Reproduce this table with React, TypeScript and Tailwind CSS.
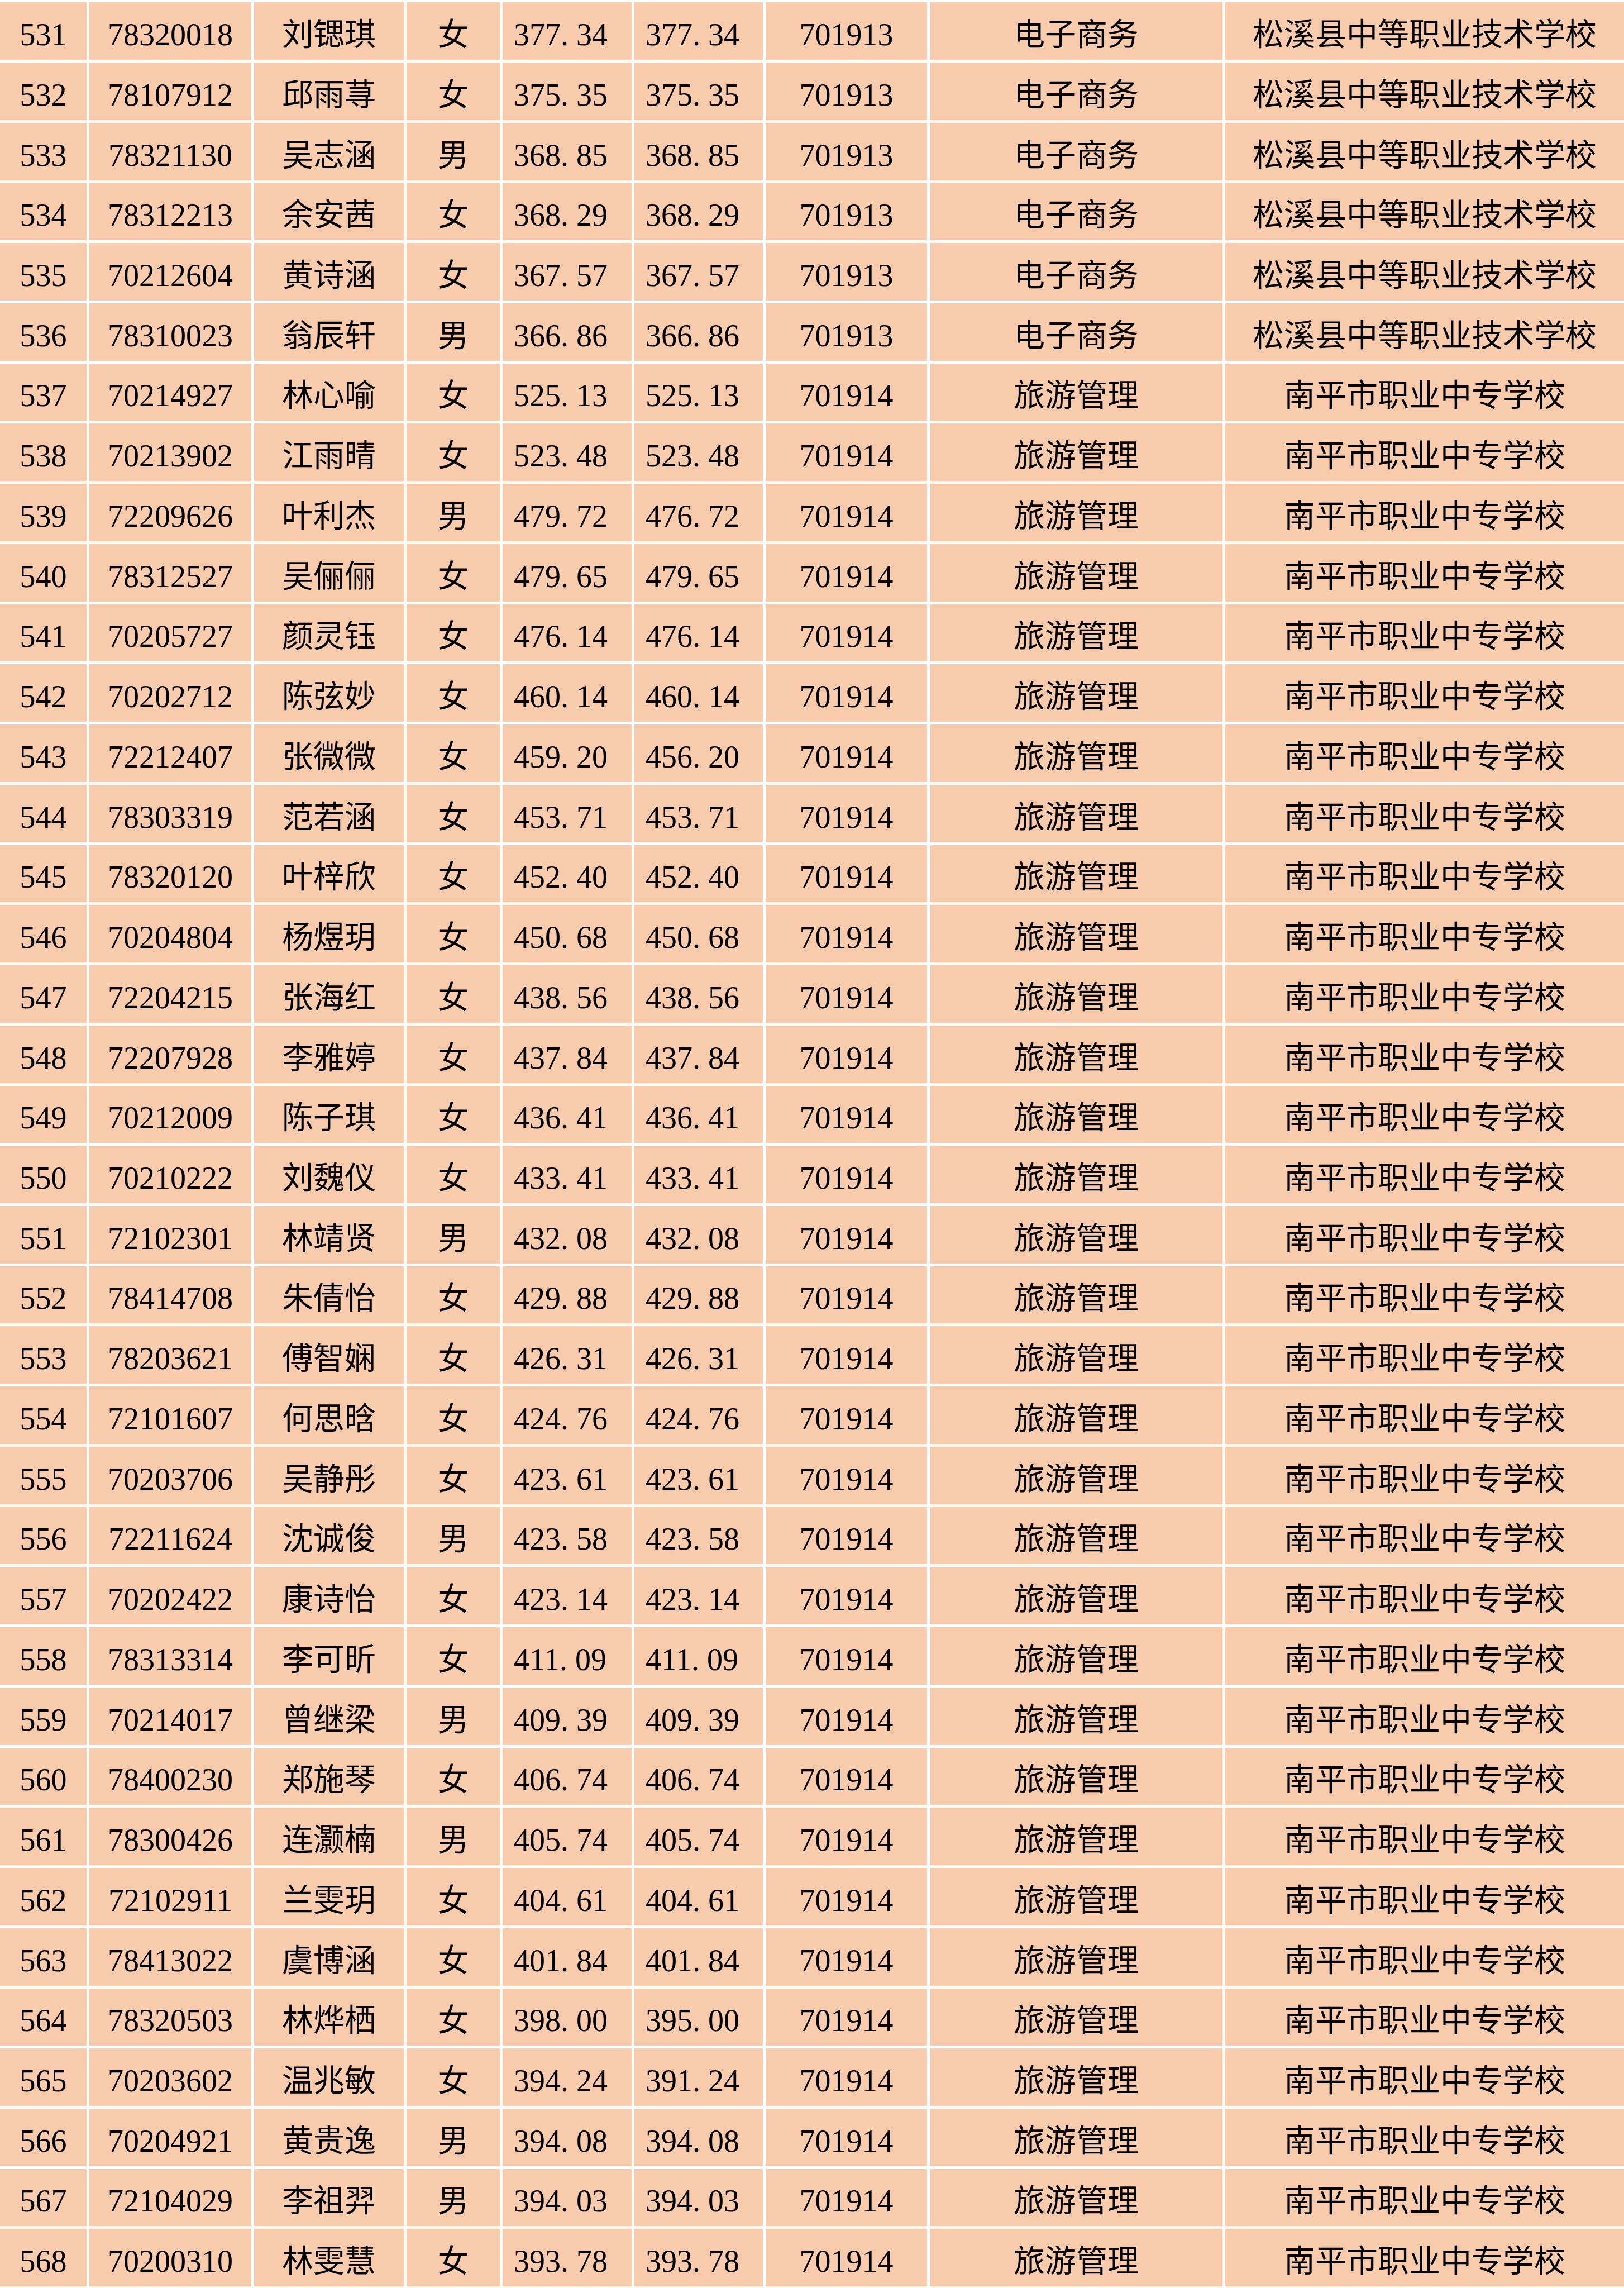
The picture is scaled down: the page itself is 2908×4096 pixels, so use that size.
const rows: [string, string, string, string, string, string, string, string, string][] = [
  ["531", "78320018", "刘锶琪", "女", "377.34", "377.34", "701913", "电子商务", "松溪县中等职业技术学校"],
  ["532", "78107912", "邱雨荨", "女", "375.35", "375.35", "701913", "电子商务", "松溪县中等职业技术学校"],
  ["533", "78321130", "吴志涵", "男", "368.85", "368.85", "701913", "电子商务", "松溪县中等职业技术学校"],
  ["534", "78312213", "余安茜", "女", "368.29", "368.29", "701913", "电子商务", "松溪县中等职业技术学校"],
  ["535", "70212604", "黄诗涵", "女", "367.57", "367.57", "701913", "电子商务", "松溪县中等职业技术学校"],
  ["536", "78310023", "翁辰轩", "男", "366.86", "366.86", "701913", "电子商务", "松溪县中等职业技术学校"],
  ["537", "70214927", "林心喻", "女", "525.13", "525.13", "701914", "旅游管理", "南平市职业中专学校"],
  ["538", "70213902", "江雨晴", "女", "523.48", "523.48", "701914", "旅游管理", "南平市职业中专学校"],
  ["539", "72209626", "叶利杰", "男", "479.72", "476.72", "701914", "旅游管理", "南平市职业中专学校"],
  ["540", "78312527", "吴俪俪", "女", "479.65", "479.65", "701914", "旅游管理", "南平市职业中专学校"],
  ["541", "70205727", "颜灵钰", "女", "476.14", "476.14", "701914", "旅游管理", "南平市职业中专学校"],
  ["542", "70202712", "陈弦妙", "女", "460.14", "460.14", "701914", "旅游管理", "南平市职业中专学校"],
  ["543", "72212407", "张微微", "女", "459.20", "456.20", "701914", "旅游管理", "南平市职业中专学校"],
  ["544", "78303319", "范若涵", "女", "453.71", "453.71", "701914", "旅游管理", "南平市职业中专学校"],
  ["545", "78320120", "叶梓欣", "女", "452.40", "452.40", "701914", "旅游管理", "南平市职业中专学校"],
  ["546", "70204804", "杨煜玥", "女", "450.68", "450.68", "701914", "旅游管理", "南平市职业中专学校"],
  ["547", "72204215", "张海红", "女", "438.56", "438.56", "701914", "旅游管理", "南平市职业中专学校"],
  ["548", "72207928", "李雅婷", "女", "437.84", "437.84", "701914", "旅游管理", "南平市职业中专学校"],
  ["549", "70212009", "陈子琪", "女", "436.41", "436.41", "701914", "旅游管理", "南平市职业中专学校"],
  ["550", "70210222", "刘魏仪", "女", "433.41", "433.41", "701914", "旅游管理", "南平市职业中专学校"],
  ["551", "72102301", "林靖贤", "男", "432.08", "432.08", "701914", "旅游管理", "南平市职业中专学校"],
  ["552", "78414708", "朱倩怡", "女", "429.88", "429.88", "701914", "旅游管理", "南平市职业中专学校"],
  ["553", "78203621", "傅智娴", "女", "426.31", "426.31", "701914", "旅游管理", "南平市职业中专学校"],
  ["554", "72101607", "何思晗", "女", "424.76", "424.76", "701914", "旅游管理", "南平市职业中专学校"],
  ["555", "70203706", "吴静彤", "女", "423.61", "423.61", "701914", "旅游管理", "南平市职业中专学校"],
  ["556", "72211624", "沈诚俊", "男", "423.58", "423.58", "701914", "旅游管理", "南平市职业中专学校"],
  ["557", "70202422", "康诗怡", "女", "423.14", "423.14", "701914", "旅游管理", "南平市职业中专学校"],
  ["558", "78313314", "李可昕", "女", "411.09", "411.09", "701914", "旅游管理", "南平市职业中专学校"],
  ["559", "70214017", "曾继梁", "男", "409.39", "409.39", "701914", "旅游管理", "南平市职业中专学校"],
  ["560", "78400230", "郑施琴", "女", "406.74", "406.74", "701914", "旅游管理", "南平市职业中专学校"],
  ["561", "78300426", "连灏楠", "男", "405.74", "405.74", "701914", "旅游管理", "南平市职业中专学校"],
  ["562", "72102911", "兰雯玥", "女", "404.61", "404.61", "701914", "旅游管理", "南平市职业中专学校"],
  ["563", "78413022", "虞博涵", "女", "401.84", "401.84", "701914", "旅游管理", "南平市职业中专学校"],
  ["564", "78320503", "林烨栖", "女", "398.00", "395.00", "701914", "旅游管理", "南平市职业中专学校"],
  ["565", "70203602", "温兆敏", "女", "394.24", "391.24", "701914", "旅游管理", "南平市职业中专学校"],
  ["566", "70204921", "黄贵逸", "男", "394.08", "394.08", "701914", "旅游管理", "南平市职业中专学校"],
  ["567", "72104029", "李祖羿", "男", "394.03", "394.03", "701914", "旅游管理", "南平市职业中专学校"],
  ["568", "70200310", "林雯慧", "女", "393.78", "393.78", "701914", "旅游管理", "南平市职业中专学校"],
];

// scores keep the wide (half-em) decimal point of the original font
function Score({ value }: { value: string }) {
  const [whole, frac] = value.split(".");
  return (
    <span>
      {whole}
      <span className="inline-block w-[0.5em] text-left">.</span>
      {frac}
    </span>
  );
}

function Cell({ children, left }: { children: React.ReactNode; left?: boolean }) {
  return (
    <div
      className={
        left
          ? "bg-[#f8cbad] flex items-end justify-start pl-[20px] pb-[17px] whitespace-nowrap overflow-hidden"
          : "bg-[#f8cbad] flex items-end justify-center pb-[17px] whitespace-nowrap overflow-hidden"
      }
    >
      <span className="leading-none">{children}</span>
    </div>
  );
}

export default function App() {
  return (
    <div className="w-full h-[4096px] overflow-hidden bg-white pt-[4.3px]">
      <div className="grid grid-cols-[155px_290px_268px_167px_231px_230px_289px_524px_1fr] auto-rows-[102.74px] gap-[5px] text-black text-[56px] font-normal font-['Liberation_Serif','Noto_Sans_CJK_SC',serif]">
        {rows.map((r) => (
          <div key={r[0]} className="contents">
            <Cell>{r[0]}</Cell>
            <Cell>{r[1]}</Cell>
            <Cell>{r[2]}</Cell>
            <Cell>{r[3]}</Cell>
            <Cell left>
              <Score value={r[4]} />
            </Cell>
            <Cell left>
              <Score value={r[5]} />
            </Cell>
            <Cell>{r[6]}</Cell>
            <Cell>{r[7]}</Cell>
            <Cell>{r[8]}</Cell>
          </div>
        ))}
      </div>
    </div>
  );
}
